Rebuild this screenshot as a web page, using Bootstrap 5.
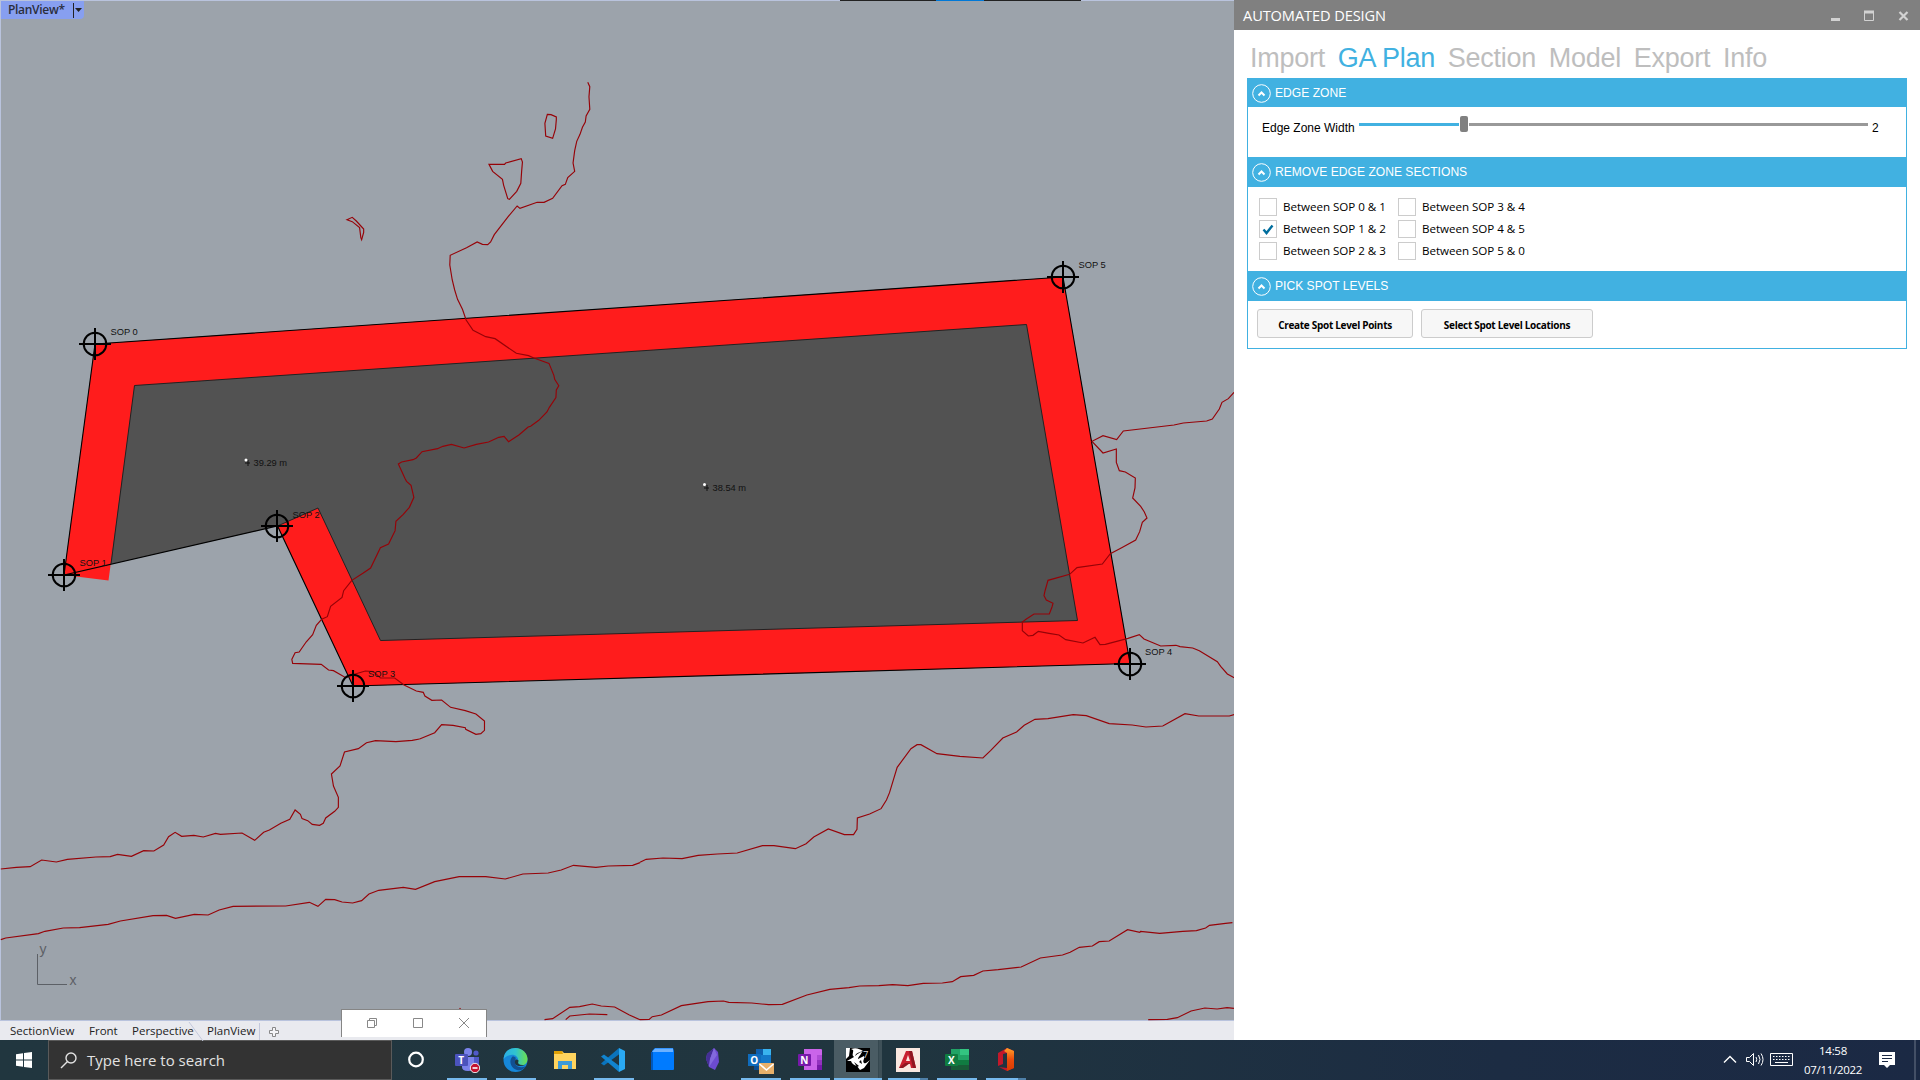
<!DOCTYPE html>
<html lang="en">
<head>
<meta charset="utf-8">
<title>Automated Design</title>
<link href="https://cdn.jsdelivr.net/npm/bootstrap@5.3.0/dist/css/bootstrap.min.css" rel="stylesheet">
<style>
  body { width: 1920px; height: 1080px; overflow: hidden; font-family: "Open Sans", sans-serif; font-size: 12px; line-height: 1; color: #000; white-space: nowrap; }
  svg { display: block; flex: none; }
  .workspace { height: 1040px; }
  .viewport-col { width: 1234px; background: #e9eaef; }
  .viewport { height: 1021px; }
  .view-tag { left: 1px; top: 1px; width: 83px; height: 18px; background: #879ff0; border-radius: 0 0 4px 0; color: #2a2e3c; font-weight: 600; padding-left: 7px; letter-spacing: -.3px; }
  .contour path { fill: none; stroke: #960308; stroke-width: 1.15px; vector-effect: non-scaling-stroke; }
  .sop-label { font: 9.3px "Liberation Sans", sans-serif; fill: #111; }
  .view-tabs { height: 19px; padding: 1px 0 0 10px; font-size: 11.5px; color: #222; }
  .mini-window { left: 341px; top: 1009px; width: 146px; height: 28px; background: #fff; border: 1px solid #858585; border-bottom: 0; padding: 0 0 1px 24px; gap: 34px; }
  .panel-col { width: 686px; }
  .title-strip { height: 30px; background: #808080; color: #fff; font-size: 14.6px; padding: 1px 10px 0 9px; }
  .title-strip span { letter-spacing: -.1px; }
  .page-tabs { height: 48px; padding: 12px 0 0 16px; gap: 12.7px; font: 27px/32px "Liberation Sans", sans-serif; color: #bebebe; letter-spacing: -.25px; }
  .page-tabs .current { color: #41b1e1; }
  .sheet { width: 660px; margin-left: 13px; border: 1px solid #41b1e1; font-family: "Liberation Sans", sans-serif; }
  .bar { background: #41b1e1; color: #fff; padding: 1px 0 0 4px; gap: 4px; height: 30px; font-size: 12.1px; }
  .bar.first { height: 28px; padding-top: 0; }
  .zone { height: 50px; padding: 0 0 0 14px; }
  .track { height: 3px; background: #999; }
  .thumb { width: 8px; height: 16px; border-radius: 2px; background: #808080; margin: 0 1px; }
  .checks { height: 84px; padding: 9px 0 0 11px; font-family: "Open Sans", sans-serif; font-size: 11.6px; }
  .checks > div { width: 139px; }
  .tick-row { height: 22px; gap: 6px; letter-spacing: -.03px; }
  .tick-box { width: 18px; height: 18px; border: 1px solid #ccc; }
  .actions { height: 47px; padding: 8px 0 0 9px; gap: 8px; }
  .actions .btn { height: 29px; padding: 2px 0 0; font: 700 10px "Open Sans", sans-serif; color: #000; background: #f7f7f7; border: 1px solid #ccc; border-radius: 3px; letter-spacing: -.3px; }
  .taskbar { height: 40px; background: linear-gradient(90deg, #21363f 0, #20353f 900px, #1c2c43 1500px, #1b2944); color: #fff; }
  .search-box { width: 344px; height: 40px; background: #333; border: 1px solid #5a5a5a; padding-left: 11px; font-size: 15px; color: #e2e2e2; gap: 10px; }
  .app { width: 49px; height: 40px; padding-top: 7px; position: relative; }
  .app.open::after { content: ""; position: absolute; left: 5px; bottom: 0; width: 40px; height: 2px; background: #76b9ed; }
  .app.multi::after { background: linear-gradient(90deg, #76b9ed 32px, #4f80a8 32px); }
  .app.active { background: linear-gradient(90deg, #4a5c64 44px, #2d4048 44px, #3e5058 45px); width: 48px; margin-right: 1px; }
  .app.active::after { left: 0; width: 48px; }
  .app svg { font-family: "Open Sans", sans-serif; font-weight: 700; }
  .clock { width: 60px; font-size: 11.5px; letter-spacing: -.3px; }
</style>
<script src="https://cdn.jsdelivr.net/npm/bootstrap@5.3.0/dist/js/bootstrap.bundle.min.js"></script>
</head>
<body class="m-0 d-flex flex-column">
<main class="workspace d-flex">
  <section class="viewport-col position-relative d-flex flex-column">
    <svg class="viewport" width="1234" height="1021" viewBox="0 0 1234 1021">
      <rect width="1234" height="1021" fill="#9ca3ab"/>
      <path d="M0 .5H1234M.5 0V1021M0 1020.5H1234" stroke="#b9c3dd"/>
      <path d="M840 .5h96M984 .5h97" stroke="#222"/>
      <path d="M936 .5h48" stroke="#0078d7"/>
      <path d="M95 344L1063 277L1130 663.5L353 686L277.5 526L64 575Z" fill="#525252"/>
      <path d="M64 575L95 344L1063 277L1130 663.5L353 686L277.5 526L318 508L380.5 640.5L1077.5 620.5L1026.5 324.5L134.5 385.5L108.5 580.5Z" fill="#ff1c1c"/>
      <path d="M95 344L1063 277L1130 663.5L353 686L277.5 526L64 575Z" fill="none" stroke="#000" stroke-width="1.1"/>
      <path d="M111 564L134.5 385.5L1026.5 324.5L1077.5 620.5L380.5 640.5L318 508L277.5 526" fill="none" stroke="#222" stroke-width="1"/>
      <g class="contour" transform="scale(.40816 .33333)">
        <path d="M1440 247L1445 260L1443 290L1445 328L1436 348L1434 366L1427 382L1421 403L1413 424L1408 452L1404 489L1408 514L1391 533L1385 553L1377 557L1354 595L1333 607L1316 607L1274 625L1267 618L1245 650L1211 704L1202 726L1195 734L1182 733L1169 726L1143 743L1103 766L1102 795L1108 840L1114 870L1121 898L1133 928L1142 960L1159 991L1190 1010L1213 1016L1265 1060L1295 1067L1308 1074"/>
        <path d="M1341 343l9 1 13 7v8l-2 28-7 28-17-7-2-38z"/>
        <path d="M1198 493h38l3-4 38-13 3 10-2 28-2 36-10 24-18 24-4-2-10-40-3-18-24-24z"/>
        <path d="M850 659l13-7 10 11 18 24v10l-5 22-2-6-3-30-18-18z"/>
      </g>
      <g class="contour" transform="translate(0 320) scale(.40816 .33333)">
        <path d="M1308 114L1345 130L1357 166L1359 178L1369 197L1363 210L1362 233L1346 262L1340 276L1320 301L1300 319L1294 321L1272 344L1246 365L1235 349L1222 352L1197 366L1167 373L1137 384L1106 373L1085 379L1072 386L1034 395L1020 414L1012 419L984 426L976 432L992 475L996 484L1007 496L1014 532L1003 562L988 583L970 604L968 632L952 672L932 683L908 744L890 759L862 781L842 812L838 832L810 859L802 890L788 898L775 916L766 944L750 966L733 996L723 998L715 1018L717 1030L787 1033L805 1050L817 1052L847 1073L862 1065L895 1053L915 1055L932 1074L967 1074L990 1095L1020 1113L1037 1117L1041 1128L1058 1141L1082 1140L1104 1162L1140 1172L1166 1182L1187 1203L1187 1231L1178 1241L1166 1243L1141 1228L1140 1223L1110 1216L1082 1214L1065 1238L1028 1257"/>
      </g>
      <g class="contour" transform="translate(960 240) scale(.33333)">
        <path d="M822 457l-17 19-19 11-8 20-21 30-17 6-70 6-28 6-152 18-20 26-41-12-33 17 33 35 40-12v40l9 25 18 4 30 18-1 30-7 30 24 25 11 17 8 18-14 13-8 28-12 25-42 23-34 18-24 31-76 11-22 20-65 18-9 32-3 14 7 13 20 10-3 11-8 21h-46l-24 16-11 8v26l18 16 14-2 16-12 32 6 30 5 20 14 52 10 36-17 15 22 16-1 68-18 34-11 14 13 50 21 46-2 12 4 38 4 20 8 54 33 10 14 20 23 22 12"/>
      </g>
      <g class="contour" transform="translate(0 700) scale(.40816 .33333)">
        <path d="M1028 117L1010 121L970 125L920 122L898 128L878 146L844 156L833 198L812 222L817 258L829 292L829 322L820 334L798 354L792 370L783 376L765 373L754 362L740 356L736 343L723 330L710 358L688 370L660 390L646 397L624 421L593 399L540 403L528 400L498 411L475 406L445 409L429 397L413 410L401 435L377 453L352 452L322 469L288 463L270 470L235 471L165 478L138 486L102 480L74 500L40 502L2 507"/>
        <path d="M2 719L14 714L94 701L110 694L155 684L195 683L265 673L295 663L375 647L408 646L430 655L476 643L510 645L537 630L571 619L700 618L758 607L779 619L798 598L820 599L838 606L864 609L886 602L904 582L928 571L988 562L1018 568L1065 545L1125 530L1190 530L1238 537L1281 522L1343 519L1375 510L1405 496L1460 502L1490 498L1550 496L1568 488"/>
        <path d="M1334 959l20-3 42-34 24-2 31-8 22 6 33 3 36 24 26 14M1386 959l10-11 48-6 44 2M1126 924l4 6"/>
      </g>
      <g class="contour" transform="translate(640 680) scale(.3827 .33333)">
        <path d="M0 547l16-9 44-4 50 2 42-10 50-4 52-3 66-22h30l56 9 28-15 20-20 38-24 42 17h24l9-16 1-34 32-12 30-16 14-26 8-22 20-76 36-56 16-12h10l42 27 60 8 60 5 20-22 32-38 36-18 20-20 28-18 34-2 66-12 34 3 60 24 60 4 36 6 44-3 58-37 36 7h80l14-5"/>
        <path d="M0 1019l24-1 8-8 24-5 52-28 70-12 40-2 14 4 60 2 44 5 36-1 64-28 60-17 50-5 28-5 50-1 36-3 40 3 40-7 50-1 26-4 22-15 34-4 24-13 40-4 60-8 50-27 58-9 20-8 24-15 34-4 18-13 26-2 48-34 32 8 2-3 50 6 60-6 36-2 24-8 10-8 42-6 18-2"/>
        <path d="M1328 1019l50-1 26-5 36-20 36-9 32 3 26-4 18 2"/>
      </g>
      <g fill="none" stroke="#000" stroke-width="2">
        <g id="mark-sop"><circle cx="95" cy="344" r="11.3"/><path d="M79 344h32M95 328v32"/></g>
        <use href="#mark-sop" x="968" y="-67"/>
        <use href="#mark-sop" x="1035" y="320"/>
        <use href="#mark-sop" x="258" y="342"/>
        <use href="#mark-sop" x="182" y="182"/>
        <use href="#mark-sop" x="-31" y="231"/>
      </g>
      <g class="sop-label">
        <text x="110.500" y="335">SOP 0</text><text x="1078.500" y="268">SOP 5</text>
        <text x="1145" y="654.500">SOP 4</text><text x="368" y="676.500">SOP 3</text>
        <text x="292.500" y="517.500">SOP 2</text><text x="79.500" y="566">SOP 1</text>
        <text x="253.500" y="466">39.29 m</text><text x="712.500" y="490.500">38.54 m</text>
      </g>
      <path d="M248 460v6M245 463h5M707 485v6M704 488h5" stroke="#111"/>
      <circle cx="246" cy="460" r="1.500" fill="#fff"/><circle cx="704.500" cy="484.500" r="1.500" fill="#fff"/>
      <path d="M37.500 954v30.500H67" fill="none" stroke="#5c6066"/>
      <g font-family="Liberation Sans, sans-serif" font-size="14" fill="#5c6066"><text x="39.500" y="953.500">y</text><text x="69.500" y="985">x</text></g>
    </svg>
    <div class="view-tabs d-flex align-items-center">
      <span style="width:79px">SectionView</span><span style="width:43px">Front</span><span style="width:56px">Perspective</span>
      <svg width="19" height="19"><path d="M1 0L15 19" stroke="#c3c8dc" fill="none"/></svg>
      <span style="width:52px">PlanView</span>
      <svg width="24" height="19"><path d="M.5 1V18" stroke="#c3c8dc"/><path d="M13.500 5.500h3v3h3v3h-3v3h-3v-3h-3v-3h3z" fill="#f4f4f7" stroke="#888"/></svg>
    </div>
    <div class="view-tag position-absolute d-flex align-items-center justify-content-between">PlanView*
      <svg width="12" height="18"><path d="M1.500 2v15" stroke="#222"/><path d="M3 7h7l-3.500 4z" fill="#222"/></svg>
    </div>
    <div class="mini-window position-absolute d-flex align-items-center">
      <svg width="12" height="12" fill="none" stroke="#888"><path d="M1.500 3.500h7v7h-7zM3.500 3.500v-2h7v7h-2"/></svg>
      <svg width="12" height="12" fill="none" stroke="#888"><path d="M1.500 1.500h9v9h-9z"/></svg>
      <svg width="12" height="12" fill="none" stroke="#888"><path d="M1 1l10 10M11 1L1 11"/></svg>
    </div>
  </section>
  <aside class="panel-col bg-white">
    <div class="title-strip d-flex align-items-center justify-content-between"><span>AUTOMATED DESIGN</span>
      <svg width="80" height="12" fill="none" stroke="#d2d2d2"><path d="M1 9.500h9" stroke-width="3"/><path d="M34.500 1v9.500h9V1" stroke-width="1"/><path d="M34 2h10" stroke-width="3"/><path d="M69.500 2l8 8M77.500 2l-8 8" stroke-width="2.200"/></svg>
    </div>
    <nav class="page-tabs d-flex"><span>Import</span><span class="current">GA Plan</span><span>Section</span><span>Model</span><span>Export</span><span>Info</span></nav>
    <div class="sheet">
      <div class="bar first d-flex align-items-center"><svg width="19" height="19" fill="none" stroke="#fff"><circle cx="9.500" cy="9.500" r="8.800"/><path d="M6.500 11.500l3-3 3 3" stroke-width="2"/></svg>EDGE ZONE</div>
      <div class="zone d-flex">
        <span style="width:97px;padding-top:15px">Edge Zone Width</span>
        <div class="d-flex align-items-center" style="height:34px">
          <div class="track" style="width:100px;background:#41b1e1"></div><div class="thumb"></div><div class="track" style="width:399px"></div>
        </div>
        <span style="padding:15px 0 0 4px">2</span>
      </div>
      <div class="bar d-flex align-items-center"><svg width="19" height="19" fill="none" stroke="#fff"><circle cx="9.500" cy="9.500" r="8.800"/><path d="M6.500 11.500l3-3 3 3" stroke-width="2"/></svg>REMOVE EDGE ZONE SECTIONS</div>
      <div class="checks d-flex">
        <div>
          <div class="tick-row d-flex align-items-center"><i class="tick-box"></i>Between SOP 0 &amp; 1</div>
          <div class="tick-row d-flex align-items-center"><i class="tick-box"><svg width="16" height="16"><path d="M3.500 8.500l3 3.500L12.500 4.500" fill="none" stroke="#006e9e" stroke-width="2.400"/></svg></i>Between SOP 1 &amp; 2</div>
          <div class="tick-row d-flex align-items-center"><i class="tick-box"></i>Between SOP 2 &amp; 3</div>
        </div>
        <div>
          <div class="tick-row d-flex align-items-center"><i class="tick-box"></i>Between SOP 3 &amp; 4</div>
          <div class="tick-row d-flex align-items-center"><i class="tick-box"></i>Between SOP 4 &amp; 5</div>
          <div class="tick-row d-flex align-items-center"><i class="tick-box"></i>Between SOP 5 &amp; 0</div>
        </div>
      </div>
      <div class="bar d-flex align-items-center"><svg width="19" height="19" fill="none" stroke="#fff"><circle cx="9.500" cy="9.500" r="8.800"/><path d="M6.500 11.500l3-3 3 3" stroke-width="2"/></svg>PICK SPOT LEVELS</div>
      <div class="actions d-flex">
        <button class="btn" style="width:156px">Create Spot Level Points</button>
        <button class="btn" style="width:172px">Select Spot Level Locations</button>
      </div>
    </div>
  </aside>
</main>
<footer class="taskbar d-flex align-items-center">
  <svg width="48" height="40" fill="#fff"><path d="M16 14.200l7-1v6.300h-7zM24 13l8-1.100v7.600h-8zM16 20.500h7v6.300l-7-1zM24 20.500h8v7.600L24 27z"/></svg>
  <div class="search-box d-flex align-items-center"><svg width="17" height="17" fill="none" stroke="#e2e2e2" stroke-width="1.400"><circle cx="11" cy="6" r="5"/><path d="M7.500 9.500L1 16"/></svg><span>Type here to search</span></div>
  <svg width="50" height="40"><circle cx="24" cy="19.500" r="6.800" fill="none" stroke="#fff" stroke-width="2.200"/></svg>
  <div class="app open d-flex justify-content-center">
    <svg width="26" height="26"><circle cx="14" cy="5" r="4" fill="#7b83eb"/><circle cx="22" cy="6" r="2.600" fill="#5059c9"/><path d="M18 10h7v9q0 4-4 4h-3z" fill="#5059c9"/><path d="M8 10h12v10q0 4-6 4t-6-4z" fill="#7b83eb"/><rect x="1" y="7" width="13" height="12" rx="1" fill="#4b53bc"/><text x="4.200" y="16.500" font-size="10" fill="#fff">T</text><circle cx="21" cy="21" r="4.700" fill="#c4122f" stroke="#eee"/><path d="M18.500 21h5" stroke="#fff" stroke-width="1.600"/></svg>
  </div>
  <div class="app open d-flex justify-content-center">
    <svg width="25" height="26" viewBox="0 0 25 26"><defs><linearGradient id="eg"><stop offset="0" stop-color="#2baee6"/><stop offset=".5" stop-color="#30c3cf"/><stop offset="1" stop-color="#6de04b"/></linearGradient></defs><circle cx="12.500" cy="13" r="12" fill="#1687d9"/><path d="M.7 12C1 5 6 1 12.500 1s12 5 12 11c0 5-4 7-8 6.500-2.500-.3-3-1.700-2-3C17 11 12 7 8 8 4 8.500 2 10 .7 12z" fill="url(#eg)"/><path d="M9 10c-4 5 0 12 5 13 4 1 7-1 9-4-6 3-12 0-11-5 0-2 1-3 1-3-1-1-3-2-4-1z" fill="#124f91"/><path d="M12.500 12.500q-2 4 1.500 6 4 1.500 8.500-.8-5 1-7-1-1-2 .2-2.700-.3-2-3.200-1.500z" fill="#20353f"/></svg>
  </div>
  <div class="app d-flex justify-content-center">
    <svg width="24" height="26"><path d="M1 4h8l2 2h12v16H1z" fill="#ffd45e"/><path d="M1 4h8l1 3H1z" fill="#e0a106"/><path d="M5 22v-8h14v8h-4v-4H9v4z" fill="#3d9bd8"/></svg>
  </div>
  <div class="app open d-flex justify-content-center">
    <svg width="25" height="26"><path d="M18.500 7L3 18.500 0 16.500 18 1z" fill="#0a74bd"/><path d="M18.500 19L3 7.500 0 9.500 18 25z" fill="#1184cf"/><path d="M18 1l6 3v18l-6 3z" fill="#2aa9f3"/></svg>
  </div>
  <div class="app d-flex justify-content-center">
    <svg width="24" height="26"><path d="M1 4L4 1h18l1 3v18q0 1-1 1H2z" fill="#007bff"/><path d="M1 5L4 1.500h18L22 5z" fill="#6bb1ff"/><path d="M1 5v18" stroke="#0058bd" stroke-width="2"/></svg>
  </div>
  <div class="app d-flex justify-content-center">
    <svg width="16" height="26"><path d="M10 1l4 4 1 10-4 8-6-3-3-8 1-5z" fill="#6c4bd0"/><path d="M10 1L3 7l-1 5 3 8 1-8z" fill="#442f95"/><path d="M10 1L6 12l-1 8 8-12z" fill="#8269dc"/></svg>
  </div>
  <div class="app open d-flex justify-content-center">
    <svg width="28" height="27"><path d="M9 2h15v16H9z" fill="#1478c9"/><path d="M9 2h7v6H9z" fill="#0f5fad"/><path d="M16 2h8v6h-8z" fill="#39b3ef"/><path d="M7 18h16v5H7z" fill="#0d4d8f"/><rect x="1" y="7" width="13" height="12" fill="#0f6cbd"/><text x="3.200" y="16.500" font-size="10" fill="#fff">O</text><path d="M12 16h15v11H12z" fill="#e8b06a"/><path d="M12.500 17l7 6 7-6" fill="none" stroke="#fff" stroke-width="1.600"/></svg>
  </div>
  <div class="app open d-flex justify-content-center">
    <svg width="26" height="26"><path d="M7 2h17q1 0 1 1v19q0 1-1 1H7z" fill="#ca64ea"/><path d="M20 8h5v5h-5z" fill="#ae4bd5"/><path d="M20 13h5v5h-5z" fill="#9332bf"/><path d="M20 18h5v5h-5z" fill="#7719aa"/><rect x="1" y="7" width="13" height="12" rx="1" fill="#7719aa"/><text x="3.200" y="16.500" font-size="10" fill="#fff">N</text></svg>
  </div>
  <div class="app open active d-flex justify-content-center">
    <svg width="24" height="25" style="margin-top:1px"><path d="M0 0h24v24H0z" fill="#000"/><path d="M0 0h4l-1 8-3 3zM5 1c5-2 9 0 12 2-3 1-7 2-8 5 4-3 5-4 7-4-2 4-4 5-4 7l6-3c1 3-2 5 0 7 2 1 3-1 6-3l-6 8-4 2-3-4c-3-1-5-2-6-5L1 13l7-4c-3-2 0-5-1-7z" fill="#fff"/><path d="M8 14l5 4-2 1zM15 12l1 4-3-2z" fill="#000"/><text x="17" y="9.500" font-size="9.500" font-weight="400" fill="#ddd">7</text></svg>
  </div>
  <div class="app open multi d-flex justify-content-center">
    <svg width="24" height="25" style="margin-top:1px"><path d="M0 0h24v24H0z" fill="#fae8e0"/><path d="M10 3h6l4 17h-5l-1-4H9l-2 4H3zM12 7l-2 6h4z" fill="#c8202f" fill-rule="evenodd"/><path d="M16 3l4 17h-3L13 3zM3 20l6-5h5l-4 3-3 2z" fill="#8f1721"/></svg>
  </div>
  <div class="app open d-flex justify-content-center">
    <svg width="26" height="26"><path d="M7 2h17q1 0 1 1v19q0 1-1 1H7z" fill="#21a366"/><path d="M16 2h9v6h-9z" fill="#33c481"/><path d="M7 13h18v5H7z" fill="#107c41"/><path d="M7 18h18v5H7z" fill="#185c37"/><rect x="1" y="7" width="13" height="12" rx="1" fill="#107c41"/><text x="3.900" y="16.500" font-size="10" fill="#fff">X</text></svg>
  </div>
  <div class="app open multi d-flex justify-content-center">
    <svg width="20" height="26"><defs><linearGradient id="og" x2="0" y2="1"><stop offset="0" stop-color="#ffa22b"/><stop offset=".5" stop-color="#eb4b0c"/><stop offset="1" stop-color="#d83b01"/></linearGradient></defs><path d="M11 1l7 3v17l-7 3-8-4 8 1V6L7 7v10l-5 2V6z" fill="#c3182a"/><path d="M11 1l7 3v17l-7 3V6L8 4z" fill="url(#og)"/></svg>
  </div>
  <div class="ms-auto d-flex align-items-center pe-1">
    <svg width="84" height="40" fill="none" stroke="#fff"><path d="M8 22.500l6-6 6 6" stroke-width="1.400"/><path d="M30.500 17.500h3l4-4v12l-4-4h-3zM40 17q1.500 2.500 0 5M42.500 15q3 4.500 0 9M45 13.500q4 6 0 12"/><path d="M54.500 13.500h22v12h-22z"/><path d="M57 16.500h18M57 19.500h18" stroke-dasharray="1.500 1.500"/><path d="M59 22.500h13"/></svg>
    <div class="clock text-center" style="margin:0 1px 0 3px"><div class="pb-1">14:58</div><div class="pt-1">07/11/2022</div></div>
    <svg width="52" height="40"><path d="M15 12h16v13h-5l-3 3-3-3h-5z" fill="#fff"/><path d="M18 15.500h10M18 18.500h10M18 21.500h6" stroke="#1b2944"/><path d="M51 0v40" stroke="#6c7688"/></svg>
  </div>
</footer>
</body>
</html>
